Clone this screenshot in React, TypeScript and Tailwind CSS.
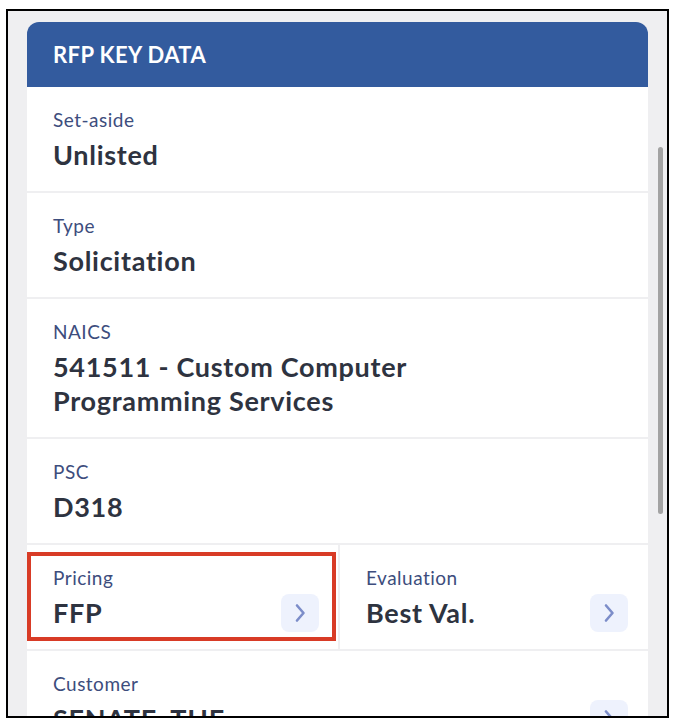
const rows = [
  { label: "Set-aside", value: "Unlisted" },
  { label: "Type", value: "Solicitation" },
  { label: "NAICS", value: "541511 - Custom Computer Programming Services" },
  { label: "PSC", value: "D318" },
];

const Chevron = () => (
  <div className="flex h-[38px] w-[38px] shrink-0 items-center justify-center rounded-lg bg-[#eef2fd]">
    <svg width="16" height="22" viewBox="0 0 16 22" fill="none">
      <path d="M5 3.5 L11.5 11 L5 18.5" stroke="#7c8dc9" strokeWidth="2.6" strokeLinecap="round" strokeLinejoin="round" />
    </svg>
  </div>
);

const Field = ({ label, value, link }: { label: string; value: string; link?: boolean }) => (
  <div className="flex items-end justify-between">
    <div>
      <div className="text-[19px] leading-[24px] tracking-[0.5px] text-[#3d4d7d]">{label}</div>
      <div className="mt-[6px] text-[27px] font-bold leading-[34px] tracking-[0.7px] text-[#2e3340]">{value}</div>
    </div>
    {link && <div className="mb-[-2px]"><Chevron /></div>}
  </div>
);

const App = () => {
  return (
    <div className="h-[724px] w-[678px] bg-white pt-[9px] pl-[6px] font-['Lato','Liberation_Sans',sans-serif]">
      <div className="relative h-[709px] w-[663px] overflow-hidden border-2 border-black bg-[#efeff1] pt-[11px] pl-[19px]">
        <div className="w-[621px]">
          <div className="flex h-[65px] items-center rounded-t-[12px] bg-[#335b9e] px-[26px]">
            <h2 className="text-[22px] font-bold tracking-[0.4px] text-white">RFP KEY DATA</h2>
          </div>
          <div className="flex flex-col gap-[2px]">
            {rows.map((r) => (
              <div key={r.label} className="bg-white pt-[21px] pr-[140px] pb-[19px] pl-[26px]">
                <Field label={r.label} value={r.value} />
              </div>
            ))}
            <div className="flex gap-[2px]">
              <div className="w-[311px] bg-white pt-[21px] pr-[19px] pb-[19px] pl-[26px]">
                <Field label="Pricing" value="FFP" link />
              </div>
              <div className="flex-1 bg-white pt-[21px] pr-[20px] pb-[19px] pl-[26px]">
                <Field label="Evaluation" value="Best Val." link />
              </div>
            </div>
            <div className="bg-white pt-[21px] pr-[20px] pb-[19px] pl-[26px]">
              <Field label="Customer" value="SENATE, THE" link />
            </div>
          </div>
        </div>
        {/* scrollbar thumb */}
        <div className="absolute top-[136px] left-[650px] h-[367px] w-[5px] rounded-full bg-[#a3a3a3]" />
        {/* highlight annotation */}
        <div className="absolute top-[541px] left-[19px] h-[89px] w-[309px] border-4 border-[#d83b26]" />
      </div>
    </div>
  );
};

export default App;
